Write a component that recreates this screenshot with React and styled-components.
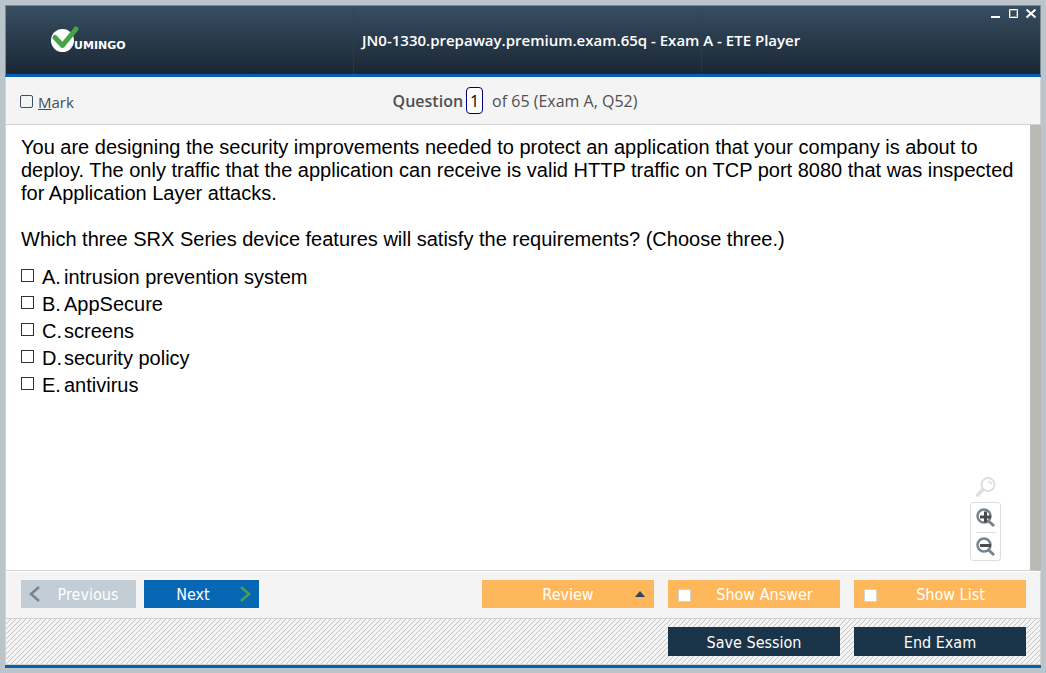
import React from 'react';
import styled, { createGlobalStyle } from 'styled-components';

const UI = '"Open Sans", "Noto Sans", sans-serif';
const BUTTON_FONT = '"DejaVu Sans Condensed", "Noto Sans", sans-serif';

const GlobalStyle = createGlobalStyle`
  *, *::before, *::after { box-sizing: border-box; }
  body { margin: 0; background: #b9c5cb; }
  button, input { font: inherit; margin: 0; }
`;

const Desktop = styled.div`
  min-height: 100vh;
  padding: 5px;
  display: flex;
  flex-direction: column;
  background: #b9c5cb;
`;

const Window = styled.main`
  flex: 1;
  display: flex;
  flex-direction: column;
  border-bottom: 3px solid #0660b0;
`;

const Header = styled.header`
  position: relative;
  display: grid;
  grid-template-columns: minmax(0, 34fr) minmax(0, 34fr) minmax(0, 33fr);
  align-items: center;
  height: 72px;
  border: 1px solid #7b8b90;
  border-bottom: 3px solid #0660b0;
  background: linear-gradient(#374e63, #1a2733);
`;

const HeaderCell = styled.div`
  height: 100%;
  display: flex;
  align-items: center;
  padding-left: ${(p) => p.$inset}px;
  border-right: 1px dotted #2b4260;
`;

const Title = styled.h1`
  margin: 0;
  color: #fff;
  font: 600 15px/20px ${UI};
  white-space: nowrap;
`;

const WindowControls = styled.div`
  position: absolute;
  top: 0;
  right: 0;
  display: flex;
`;

const ControlButton = styled.button`
  width: 18px;
  height: 16px;
  padding: 0;
  border: 0;
  background: none;
  display: grid;
  place-items: center;
`;

const SubHeader = styled.div`
  display: grid;
  grid-template-columns: 1fr auto 1fr;
  align-items: center;
  height: 48px;
  padding: 0 30px 0 14px;
  background: #f4f4f4;
  border: 1px solid #d2d2d2;
  border-top: 0;
`;

const MarkLabel = styled.label`
  display: flex;
  align-items: center;
  gap: 5px;
  padding-top: 2px;
  color: #3d4f60;
  font: 15px/20px ${UI};
`;

const Tick = styled.input`
  appearance: none;
  flex: none;
  width: 13px;
  height: 13px;
  border: 1px solid ${(p) => p.$border || '#333'};
  border-radius: ${(p) => p.$radius || 0}px;
  background: ${(p) => p.$fill || '#fff'};
  &:checked { background: #0867b5; }
`;

const Counter = styled.div`
  display: flex;
  align-items: center;
  color: #505050;
  font: 16px/24px ${UI};
  white-space: nowrap;
`;

const CounterLabel = styled.label`
  font-weight: 600;
`;

const NumberBox = styled.input`
  width: 17px;
  height: 27px;
  margin: 0 9px 0 3px;
  padding: 0;
  border: 1px solid #00007d;
  border-radius: 4px;
  background: #fff;
  color: #000;
  text-align: center;
`;

const Content = styled.section`
  position: relative;
  flex: 1;
  padding: 11px 8px 0 15px;
  background: #fff;
  border-left: 1px solid #d2d2d2;
  border-right: 11px solid #bbb9b5;
  border-bottom: 1px solid #d2d2d2;
  color: #000;
  font: 20px/23px "Liberation Sans", Arial, sans-serif;
`;

const Paragraph = styled.p`
  margin: 0 0 23px;
`;

const Options = styled.fieldset`
  margin: -10px 0 0;
  padding: 0;
  border: 0;
`;

const Option = styled.label`
  display: grid;
  grid-template-columns: 21px 22px 1fr;
  align-items: center;
  height: 27px;

  ${Tick} { margin-bottom: 4px; }
`;

const ZoomTools = styled.div`
  position: absolute;
  right: 29px;
  bottom: 9px;
  display: flex;
  flex-direction: column;
  align-items: center;
  gap: 4px;
`;

const ZoomGroup = styled.div`
  display: flex;
  flex-direction: column;
  align-items: center;
  width: 31px;
  border: 1px solid #dedede;
  border-radius: 3px;
`;

const ZoomButton = styled.button`
  width: 20px;
  height: ${(p) => p.$height || 29}px;
  padding: 0;
  border: 0;
  background: none;
  display: grid;
  place-items: center;
  & + & { border-top: 1px solid #dedede; }
`;

const ActionBar = styled.div`
  display: flex;
  gap: 14px;
  align-items: center;
  height: 48px;
  padding: 0 14px 2px 15px;
  background: #f4f4f4;
  border: 1px solid #d2d2d2;
  border-top: 1px solid #fff;
`;

const NavGroup = styled.div`
  display: flex;
  gap: 8px;
  margin-right: auto;
`;

const SessionBar = styled.footer`
  display: flex;
  justify-content: flex-end;
  align-items: center;
  gap: 14px;
  height: 46px;
  padding-right: 14px;
  border: 1px solid #d2d2d2;
  border-top: 0;
  background: linear-gradient(135deg, #f4f4f4 0 44%, #c3c3c3 44% 56%, #f4f4f4 56%) 0 0 / 5px 5px;
`;

const tones = {
  disabled: '#c3cdd6',
  primary: '#0867b5',
  accent: '#ffb75b',
  dark: '#1a344a',
};

const Button = styled.button`
  position: relative;
  width: ${(p) => p.$width || 172}px;
  height: ${(p) => p.$height || 28}px;
  padding: ${(p) => p.$pad || '2px 0 0'};
  border: 0;
  background: ${(p) => tones[p.$tone]};
  color: #fff;
  font: 16px/20px ${BUTTON_FONT};
  text-align: center;
  white-space: nowrap;
`;

const ToggleLabel = styled.label`
  display: grid;
  grid-template-columns: 13px 1fr;
  align-items: center;
  width: 172px;
  height: 28px;
  padding: 2px 2px 0 10px;
  background: #ffb75b;
  color: #fff;
  font: 16px/20px ${BUTTON_FONT};
  text-align: center;
  white-space: nowrap;
`;

const ButtonIcon = styled.svg`
  position: absolute;
  top: 6px;
  ${(p) => p.$side}: 8px;
`;

const Logo = () => (
  <svg width="84" height="30" viewBox="0 0 84 30" role="img" aria-label="Vumingo">
    <circle cx="12.5" cy="15.5" r="11.5" fill="#fff" />
    <path d="M5 12.5 L12.5 20.5 L26 4" fill="none" stroke="#45a446" strokeWidth="5" strokeLinecap="round" strokeLinejoin="round" />
    <text x="24" y="24" fill="#fff" fontFamily="DejaVu Sans, sans-serif" fontWeight="700" fontSize="11">UMINGO</text>
  </svg>
);

const options = [
  ['A.', 'intrusion prevention system'],
  ['B.', 'AppSecure'],
  ['C.', 'screens'],
  ['D.', 'security policy'],
  ['E.', 'antivirus'],
];

export default function App() {
  return (
    <Desktop>
      <GlobalStyle />
      <Window>
        <Header>
          <HeaderCell $inset={44}><Logo /></HeaderCell>
          <HeaderCell $inset={8}>
            <Title>JN0-1330.prepaway.premium.exam.65q - Exam A - ETE Player</Title>
          </HeaderCell>
          <WindowControls>
            <ControlButton aria-label="Minimize">
              <svg width="10" height="10"><path d="M1 7h9v2H1z" fill="#fff" /></svg>
            </ControlButton>
            <ControlButton aria-label="Maximize">
              <svg width="10" height="10" fill="none">
                <path d="M1.5 .5h8v8h-8z" stroke="#fff" />
                <path d="M2.5 1.5h6v6h-6z" stroke="#8b8580" />
              </svg>
            </ControlButton>
            <ControlButton aria-label="Close">
              <svg width="12" height="10"><path d="M1.5 .5l9 8M10.5 .5l-9 8" stroke="#fff" strokeWidth="2" /></svg>
            </ControlButton>
          </WindowControls>
        </Header>
        <SubHeader>
          <MarkLabel>
            <Tick type="checkbox" $border="#3d4f60" $radius={2} $fill="transparent" />
            <span><u>M</u>ark</span>
          </MarkLabel>
          <Counter>
            <CounterLabel htmlFor="question-number">Question</CounterLabel>
            <NumberBox id="question-number" defaultValue="1" />
            <span>of 65 (Exam A, Q52)</span>
          </Counter>
        </SubHeader>
        <Content>
          <Paragraph>
            You are designing the security improvements needed to protect an application that your company is about to
            deploy. The only traffic that the application can receive is valid HTTP traffic on TCP port 8080 that was
            inspected for Application Layer attacks.
          </Paragraph>
          <Paragraph>
            Which three SRX Series device features will satisfy the requirements? (Choose three.)
          </Paragraph>
          <Options>
            {options.map(([letter, text]) => (
              <Option key={letter}>
                <Tick type="checkbox" />
                <span>{letter}</span>
                <span>{text}</span>
              </Option>
            ))}
          </Options>
          <ZoomTools>
            <ZoomButton $height={22} aria-label="Reset zoom">
              <svg width="20" height="20" fill="none" stroke="#dedede">
                <circle cx="12" cy="7.5" r="6.5" strokeWidth="2" />
                <path d="M12 4.5q3 0 3.5 3" strokeWidth="1.5" />
                <path d="M7 12.5l-5.5 5.5" strokeWidth="3.5" strokeLinecap="round" />
              </svg>
            </ZoomButton>
            <ZoomGroup>
              <ZoomButton aria-label="Zoom in">
                <svg width="20" height="20" fill="none" stroke="#75838e">
                  <circle cx="8" cy="8" r="6.5" strokeWidth="2.5" />
                  <path d="M12.500 13l5.500 5" strokeWidth="3" />
                  <path d="M4 9h11M9.500 3.500v11" stroke="#4a4a4a" strokeWidth="3" />
                </svg>
              </ZoomButton>
              <ZoomButton $height={28} aria-label="Zoom out">
                <svg width="20" height="20" fill="none" stroke="#75838e">
                  <circle cx="8" cy="8" r="6.5" strokeWidth="2.5" />
                  <path d="M12.500 13l5.500 5" strokeWidth="3" />
                  <path d="M4 8.500h11" stroke="#4a4a4a" strokeWidth="3" />
                </svg>
              </ZoomButton>
            </ZoomGroup>
          </ZoomTools>
        </Content>
        <ActionBar>
          <NavGroup>
            <Button $tone="disabled" $width={115} $pad="2px 0 0 19px">
              <ButtonIcon $side="left" width="11" height="16" fill="none" stroke="#77838e" strokeWidth="2.5"><path d="M10 1L2 8l8 7" /></ButtonIcon>
              Previous
            </Button>
            <Button $tone="primary" $width={115} $pad="2px 17px 0 0">
              Next
              <ButtonIcon $side="right" width="11" height="16" fill="none" stroke="#45a446" strokeWidth="2.5"><path d="M1 1l8 7-8 7" /></ButtonIcon>
            </Button>
          </NavGroup>
          <Button $tone="accent">
            Review
            <ButtonIcon $side="right" width="12" height="16"><path d="M1 11l5-6 5 6z" fill="#2c485e" /></ButtonIcon>
          </Button>
          <ToggleLabel><Tick type="checkbox" $border="#d2d2d2" />Show Answer</ToggleLabel>
          <ToggleLabel><Tick type="checkbox" $border="#d2d2d2" />Show List</ToggleLabel>
        </ActionBar>
        <SessionBar>
          <Button $tone="dark" $height={29}>Save Session</Button>
          <Button $tone="dark" $height={29}>End Exam</Button>
        </SessionBar>
      </Window>
    </Desktop>
  );
}
